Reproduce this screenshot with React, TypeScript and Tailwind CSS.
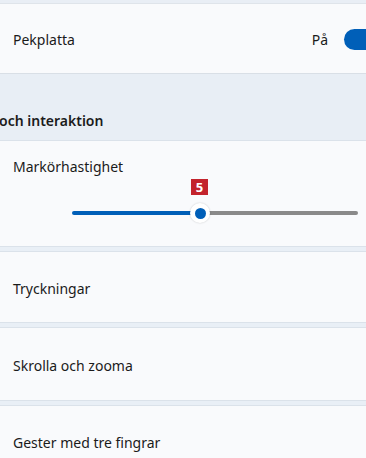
export default function App() {
  return (
    <div
      className="w-[366px] h-[458px] overflow-hidden bg-[#e9eff6] text-[#1b1b1b] text-[14px]"
      style={{ fontFamily: '"Noto Sans", "Open Sans", sans-serif' }}
    >
      {/* Top strip */}
      <div className="h-[4px] bg-[#e9eef5] border-b border-[#dfe4ea]" />

      {/* Pekplatta row */}
      <div className="h-[70px] bg-[#f9fafc] border-b border-[#d9dfe6] flex items-center pl-[13px] pt-[2px]">
        <span className="flex-1">Pekplatta</span>
        <span className="mr-[16px]">På</span>
        <div className="w-[40px] h-[21px] rounded-full bg-[#005fb8] -mr-[18px] shrink-0" />
      </div>

      {/* Section header */}
      <div className="h-[66px] flex items-end pb-[9px] font-semibold bg-[#e8eef5]">
        <span className="-ml-[1px]">och interaktion</span>
      </div>

      {/* Slider card */}
      <div className="h-[107px] bg-[#f9fafc] border-t border-[#dbe2ea] border-b flex flex-col pl-[13px]">
        <span className="mt-[15px]">Markörhastighet</span>
        <div className="relative ml-[59px] mr-[8px] mt-[34px] h-[4px] flex">
          <div className="w-[128px] h-[4px] rounded-full bg-[#005fb8]" />
          <div className="flex-1 h-[4px] rounded-full bg-[#8a8a8a] ml-[2px]" />
          <div className="absolute left-[118px] -top-[8px] w-[20px] h-[20px] rounded-full bg-white shadow-[0_0_2px_rgba(0,0,0,0.2)] flex items-center justify-center">
            <div className="w-[11px] h-[11px] rounded-full bg-[#005fb8]" />
          </div>
          <div className="absolute left-[119px] -top-[32px] w-[17px] h-[16px] bg-[#c3232c] text-white font-bold text-[13px] leading-[16px] text-center">
            5
          </div>
        </div>
      </div>

      {/* List cards */}
      <div className="mt-[4px] h-[72px] bg-[#f9fafc] border-t border-b border-[#dbe2ea] flex items-center pl-[13px] pt-[2px]">
        Tryckningar
      </div>
      <div className="mt-[4px] h-[74px] bg-[#f9fafc] border-t border-b border-[#dbe2ea] flex items-center pl-[13px] pt-[2px]">
        Skrolla och zooma
      </div>
      <div className="mt-[4px] h-[74px] bg-[#f9fafc] border-t border-[#dbe2ea] flex items-center pl-[13px]">
        Gester med tre fingrar
      </div>
    </div>
  );
}
